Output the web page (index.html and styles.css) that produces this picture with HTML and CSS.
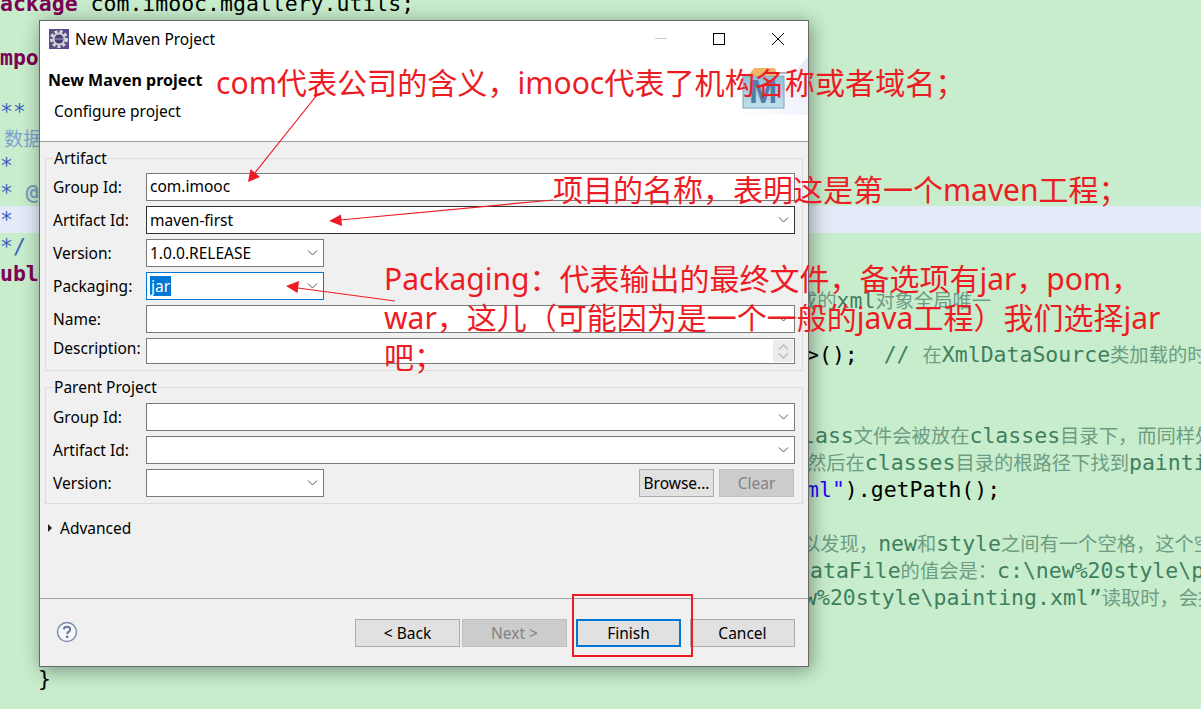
FILE: index.html
```html
<!doctype html>
<html lang="zh">

<head>
  <meta charset="utf-8">
  <title>New Maven Project</title>
  <link rel="stylesheet" href="styles.css">
</head>

<body>
  <div class="editor">
    <div class="ln kw">package <span class="code">com.imooc.mgallery.utils;</span></div>
    <div class="ln"></div>
    <div class="ln kw">import</div>
    <div class="ln"></div>
    <div class="ln doc">/**</div>
    <div class="ln"><i class="zh lead">数据</i></div>
    <div class="ln doc"> *</div>
    <div class="ln doc"> * <span class="tag">@</span></div>
    <div class="ln doc cur"> *</div>
    <div class="ln doc"> */</div>
    <div class="ln kw">public</div>
    <div class="ln cm t798"><i class="zh">成的</i>xml<i class="zh">对象全局唯一</i></div>
    <div class="ln"></div>
    <div class="ln code t806">&gt;();  <span class="cm">// <i class="zh">在</i>XmlDataSource<i class="zh">类加载的时候</i></span></div>
    <div class="ln"></div>
    <div class="ln"></div>
    <div class="ln cm t802">lass<i class="zh">文件会被放在</i>classes<i class="zh">目录下，而同样处</i></div>
    <div class="ln cm t807"><i class="zh">然后在</i>classes<i class="zh">目录的根路径下找到</i>painting</div>
    <div class="ln code t806"><span class="str">ml"</span>).getPath();</div>
    <div class="ln"></div>
    <div class="ln cm t801"><i class="zh">以发现，</i>new<i class="zh">和</i>style<i class="zh">之间有一个空格，这个空</i></div>
    <div class="ln cm t810">ataFile<i class="zh">的值会是：</i>c:\new%20style\p</div>
    <div class="ln cm t804">w%20style\painting.xml”<i class="zh">读取时，会报</i></div>
    <div class="ln"></div>
    <div class="ln"></div>
    <div class="ln code t38">}</div>
  </div>

  <div class="dialog">
    <div class="titlebar">
      <svg class="app_icon" width="20" height="20" viewBox="0 0 20 20">
        <rect width="20" height="20" fill="#5b4b8a"/>
        <circle cx="10" cy="10" r="7.5" fill="none" stroke="#d8d8d8" stroke-width="3" stroke-dasharray="3 2.1"/>
        <circle cx="10" cy="10" r="6.5" fill="#cfcfd6"/>
        <circle cx="10" cy="10" r="4.5" fill="#4a3f78"/>
        <rect x="5.5" y="9.5" width="9" height="1" fill="#a9a4c4"/>
      </svg>
      <span class="title">New Maven Project</span>
      <svg class="win_btns" width="130" height="14" viewBox="0 0 130 14">
        <path d="M1 6.500H13" stroke="#cccccc" fill="none"/>
        <rect x="59.500" y="1.500" width="11" height="11" stroke="#000" fill="none"/>
        <path d="M118 1L130 13M130 1L118 13" stroke="#000" fill="none"/>
      </svg>
    </div>

    <div class="banner">
      <div class="banner_title">New Maven project</div>
      <div class="banner_sub">Configure project</div>
      <svg class="banner_img" width="72" height="60" viewBox="0 0 72 60">
        <defs>
          <linearGradient id="sw" x1="0" y1="1" x2="1" y2="0">
            <stop offset="0" stop-color="#ffffff"/>
            <stop offset="1" stop-color="#e6eaf8"/>
          </linearGradient>
          <linearGradient id="box" x1="0" y1="0" x2="0" y2="1">
            <stop offset="0" stop-color="#8fbfd8"/>
            <stop offset="1" stop-color="#c3e0ec"/>
          </linearGradient>
        </defs>
        <path d="M0 58C30 50 52 20 72 0V58Z" fill="url(#sw)"/>
        <rect x="7" y="19" width="41" height="32" fill="url(#box)" stroke="#7aa3bc"/>
        <path d="M12 19L18 11H39L42 19Z" fill="#f0b568"/>
        <path d="M41 16H53" stroke="#a9b4bb" stroke-width="2"/>
        <text class="banner_m" x="13" y="46">M</text>
      </svg>
    </div>

    <div class="content">
      <fieldset class="group">
        <legend>Artifact</legend>
        <div class="form">
          <label>Group Id:</label>
          <div class="field">com.imooc</div>
          <label>Artifact Id:</label>
          <div class="field dark combo"><span>maven-first</span>
            <svg class="chev" width="11" height="6" viewBox="0 0 11 6"><path d="M1 .5L5.500 5L10 .5"/></svg>
          </div>
          <label>Version:</label>
          <div class="field combo small"><span>1.0.0.RELEASE</span>
            <svg class="chev" width="11" height="6" viewBox="0 0 11 6"><path d="M1 .5L5.500 5L10 .5"/></svg>
          </div>
          <label>Packaging:</label>
          <div class="field combo small focus"><span class="sel">jar</span>
            <svg class="chev" width="11" height="6" viewBox="0 0 11 6"><path d="M1 .5L5.500 5L10 .5"/></svg>
          </div>
          <label>Name:</label>
          <div class="field combo"><span></span>
            <svg class="chev" width="11" height="6" viewBox="0 0 11 6"><path d="M1 .5L5.500 5L10 .5"/></svg>
          </div>
          <label class="lbl_desc">Description:</label>
          <div class="field desc">
            <div class="spin">
              <svg class="spin_a" width="11" height="6" viewBox="0 0 11 6"><path d="M1 5.500L5.500 1L10 5.500"/></svg>
              <svg class="spin_a" width="11" height="6" viewBox="0 0 11 6"><path d="M1 .5L5.500 5L10 .5"/></svg>
            </div>
          </div>
        </div>
      </fieldset>

      <fieldset class="group parent">
        <legend>Parent Project</legend>
        <div class="form">
          <label>Group Id:</label>
          <div class="field combo"><span></span>
            <svg class="chev" width="11" height="6" viewBox="0 0 11 6"><path d="M1 .5L5.500 5L10 .5"/></svg>
          </div>
          <label>Artifact Id:</label>
          <div class="field combo"><span></span>
            <svg class="chev" width="11" height="6" viewBox="0 0 11 6"><path d="M1 .5L5.500 5L10 .5"/></svg>
          </div>
          <label>Version:</label>
          <div class="ver_row">
            <div class="field combo small"><span></span>
              <svg class="chev" width="11" height="6" viewBox="0 0 11 6"><path d="M1 .5L5.500 5L10 .5"/></svg>
            </div>
            <button class="btn browse">Browse...</button>
            <button class="btn clear off">Clear</button>
          </div>
        </div>
      </fieldset>

      <div class="advanced"><span class="tri"></span>Advanced</div>
    </div>

    <div class="footer">
      <svg class="help" width="22" height="22" viewBox="0 0 22 22">
        <circle cx="11" cy="11" r="9.500" fill="#f4f6fa" stroke="#7d8ba6" stroke-width="1.400"/>
        <path d="M7.800 8.400C8 6.600 9.300 5.800 11 5.800C12.900 5.800 14.200 6.800 14.200 8.400C14.200 10.600 11.200 10.600 11.200 13" fill="none" stroke="#6b7a98" stroke-width="2"/>
        <rect x="10" y="14.600" width="2.400" height="2.400" fill="#6b7a98"/>
      </svg>
      <div class="nav">
        <button class="btn">&lt; Back</button>
        <button class="btn off">Next &gt;</button>
        <button class="btn primary">Finish</button>
        <button class="btn">Cancel</button>
      </div>
    </div>
  </div>

  <!-- red notes somebody painted on the screenshot -->
  <div class="note note1">com代表公司的含义，imooc代表了机构名称或者域名；</div>
  <div class="note note2">项目的名称，表明这是第一个maven工程；</div>
  <div class="note note3">Packaging：代表输出的最终文件，备选项有jar，pom，<br>war，这儿（可能因为是一个一般的java工程）我们选择jar<br>吧；</div>
  <div class="redbox"></div>
  <svg class="arrows" width="1201" height="709" viewBox="0 0 1201 709">
    <path d="M317 95L254 174M553 200L340 220M395 301L298 288" fill="none" stroke="#ed1c24" stroke-width="1.200"/>
    <path d="M248 182L250.500 169L260 177Z" fill="#ed1c24"/>
    <path d="M329 221L341 214.500L342 226Z" fill="#ed1c24"/>
    <path d="M286 286L299 281L297.500 293Z" fill="#ed1c24"/>
  </svg>
</body>

</html>
```

FILE: styles.css
```css
html, body {
  margin: 0;
  height: 709px;
  overflow: hidden;
}

body {
  background-color: #c7edcc;
  position: relative;
}

/* editor behind the dialog */
.editor {
  margin-left: -13px;
  margin-top: -10px;
  font-family: "DejaVu Sans Mono", monospace;
  font-size: 21.5px;
  color: #000;
}

.ln {
  height: 27px;
  line-height: 27px;
  white-space: pre;
}

.zh {
  font-family: "Noto Sans CJK SC", sans-serif;
  font-style: normal;
  font-size: 19.3px;
  color: #6d9c83;
}

.lead {
  margin-left: 17px;
  color: #7f9fd0;
}

.kw {
  color: #7f0055;
  font-weight: bold;
}

.code {
  color: #000;
  font-weight: normal;
}

.doc {
  color: #3f5fbf;
}

.tag {
  color: #7f9fbf;
  font-weight: bold;
}

.cur {
  background-color: #e3ebf8;
  margin-left: 13px;
  text-indent: -13px;
}

.cm {
  color: #3f7f5f;
}

.str {
  color: #2a00ff;
}

.t38 { padding-left: 51px; }
.t798 { padding-left: 811px; }
.t801 { padding-left: 814px; }
.t802 { padding-left: 815px; }
.t804 { padding-left: 817px; }
.t806 { padding-left: 819px; }
.t807 { padding-left: 820px; }
.t810 { padding-left: 823px; }

/* dialog */
.dialog {
  position: absolute;
  left: 39px;
  top: 20px;
  width: 768px;
  height: 645px;
  border: 1px solid #666b66;
  background-color: #f0f0f0;
  box-shadow: 2px 3px 18px rgba(0, 0, 0, 0.4);
  display: flex;
  flex-direction: column;
  font-family: "Noto Sans", sans-serif;
  font-size: 15.5px;
  color: #000;
}

.titlebar {
  height: 36px;
  background-color: #fff;
  display: flex;
  align-items: center;
  padding: 0 24px 0 9px;
  flex: none;
}

.app_icon {
  margin-right: 6px;
}

.title {
  flex: 1;
}

.win_btns {
  display: block;
}

.banner {
  height: 84px;
  background-color: #fff;
  border-bottom: 1px solid #a0a0a0;
  position: relative;
  flex: none;
}

.banner_title {
  font-weight: bold;
  font-size: 16px;
  margin-left: 8px;
  padding-top: 13px;
  line-height: 20px;
}

.banner_sub {
  margin-left: 14px;
  margin-top: 11px;
  line-height: 20px;
}

.banner_img {
  position: absolute;
  right: 0;
  top: 0;
}

.banner_m {
  font-family: "Liberation Sans", sans-serif;
  font-weight: bold;
  font-size: 34px;
  fill: #4f7fa8;
}

.content {
  flex: 1;
  padding: 6px 5px 0 5px;
}

.group {
  margin: 0;
  padding: 5px 7px 6px 7px;
  border: 1px solid #dcdcdc;
  min-width: 0;
}

.group legend {
  padding: 0;
  margin-left: 1px;
  line-height: 20px;
  height: 20px;
}

.parent {
  margin-top: 6px;
  padding-top: 6px;
}

.form {
  display: grid;
  grid-template-columns: 93px 1fr;
  row-gap: 5px;
  align-items: center;
}

.form label {
  line-height: 20px;
}

.lbl_desc {
  position: relative;
  top: -3px;
}

.field {
  height: 26px;
  border: 1px solid #7a7a7a;
  background-color: #fff;
  line-height: 25px;
  padding: 0 3px 0 3px;
}

.dark {
  border-color: #333;
}

.combo {
  display: flex;
  align-items: center;
  justify-content: space-between;
  padding-right: 5px;
}

.small {
  width: 168px;
}

.focus {
  border-color: #0078d7;
}

.sel {
  background-color: #0078d7;
  color: #fff;
  line-height: 20px;
  padding: 0 1px;
  margin-left: 0;
}

.chev path {
  fill: none;
  stroke: #555;
}

.desc {
  height: 24px;
  display: flex;
  justify-content: flex-end;
  align-items: center;
  padding: 0 1px;
}

.spin {
  width: 20px;
  height: 22px;
  background-color: #ececec;
  display: flex;
  flex-direction: column;
  align-items: center;
  justify-content: center;
  gap: 3px;
}

.spin_a path {
  fill: none;
  stroke: #bdbdbd;
  stroke-width: 1.5;
}

.ver_row {
  display: flex;
  padding-right: 1px;
}

.browse {
  margin-left: auto;
}

.clear {
  margin-left: 5px;
}

.btn {
  box-sizing: border-box;
  height: 28px;
  width: 75px;
  border: 1px solid #adadad;
  background-color: #e1e1e1;
  color: #000;
  font: inherit;
  padding: 0;
}

.off {
  background-color: #cccccc;
  border-color: #bfbfbf;
  color: #838383;
}

.advanced {
  margin-top: 14px;
  line-height: 20px;
  padding-left: 3px;
  display: flex;
  align-items: center;
}

.tri {
  width: 0;
  height: 0;
  border-left: 4px solid #222;
  border-top: 4px solid transparent;
  border-bottom: 4px solid transparent;
  margin-right: 8px;
}

.footer {
  height: 68px;
  border-top: 1px solid #a0a0a0;
  flex: none;
  display: flex;
  justify-content: space-between;
  align-items: flex-start;
  padding: 20px 13px 0 16px;
  box-sizing: border-box;
}

.help {
  margin-top: 2px;
}

.nav {
  display: flex;
}

.nav .btn {
  width: 105px;
  margin-left: 2px;
}

.nav .primary {
  border: 2px solid #0078d7;
  margin-left: 9px;
}

.nav .primary + .btn {
  margin-left: 9px;
}

/* red marks on top */
.note {
  position: absolute;
  font-family: "Noto Sans", "Noto Sans CJK SC", sans-serif;
  font-size: 30px;
  line-height: 39px;
  color: #ed1c24;
  white-space: nowrap;
}

.note1 { left: 216px; top: 63px; font-size: 30.1px; }
.note2 { left: 553px; top: 170px; }
.note3 { left: 384px; top: 259px; }

.redbox {
  position: absolute;
  left: 572px;
  top: 594px;
  width: 117px;
  height: 59px;
  border: 2px solid #ed1c24;
}

.arrows {
  position: absolute;
  left: 0;
  top: 0;
}
```
